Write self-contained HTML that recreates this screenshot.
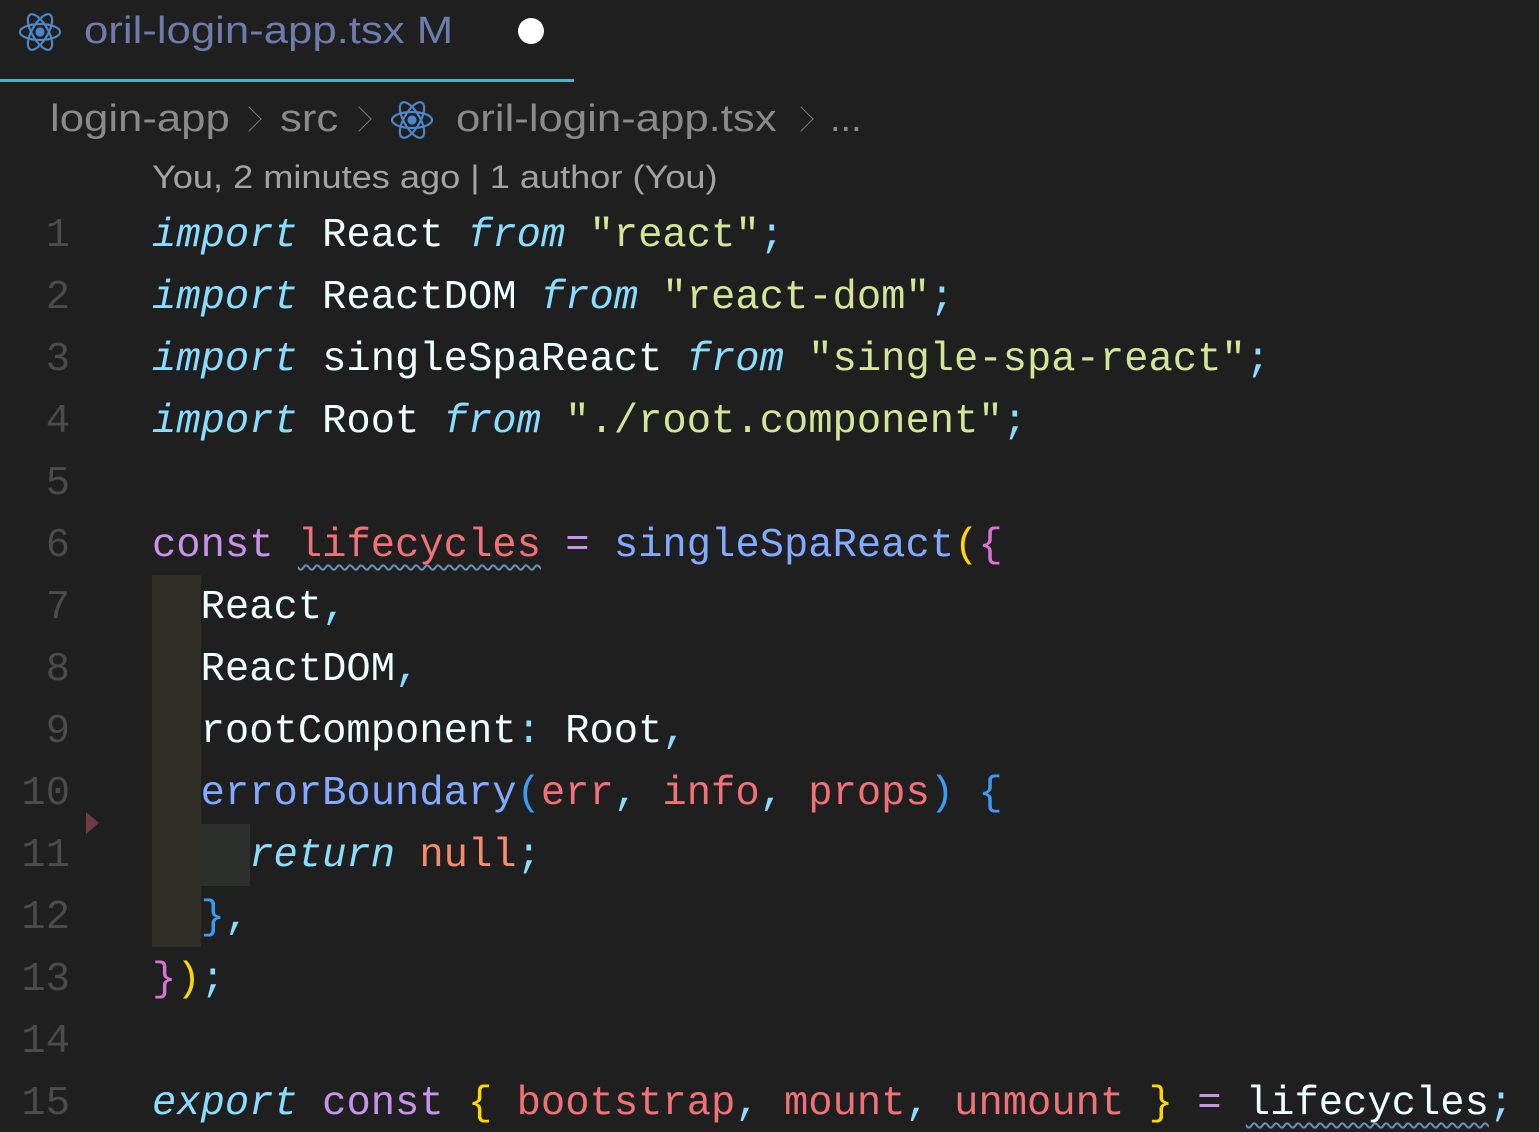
<!DOCTYPE html>
<html><head><meta charset="utf-8"><style>
html,body{margin:0;padding:0;background:#1f1f1f;width:1539px;height:1132px;overflow:hidden;position:relative}
.sans{font-family:"Liberation Sans",sans-serif;position:absolute;white-space:nowrap;transform-origin:0 0}
.ln{position:absolute;left:0;width:70px;text-align:right;font-family:"Liberation Mono",monospace;font-size:40.5px;color:#4b4b4b;line-height:62px}
.code{position:absolute;left:152px;font-family:"Liberation Mono","DejaVu Sans Mono",monospace;font-size:40.5px;line-height:62px;white-space:pre;color:#eeffff}
.k{color:#89ddff;font-style:italic}.s{color:#d4e59a}.p{color:#c792ea}.v{color:#f07178}.f{color:#82aaff}.y{color:#ffd700}.b{color:#89ddff}.o{color:#f78c6c}.w{color:#eeffff}.pk{color:#d675d6}.bl{color:#3b9cf5}
.sq{text-decoration:underline wavy #6a90b8;text-decoration-thickness:2px;text-underline-offset:8px}
.chev{position:absolute;width:17px;height:17px;border-right:1.6px solid #7a7a7a;border-top:1.6px solid #7a7a7a;transform:rotate(45deg)}
</style></head><body>
<svg style="position:absolute;left:18px;top:10px" width="44" height="44" viewBox="-22 -22 44 44" fill="none" stroke="#4c86c6" stroke-width="2.2"><ellipse rx="20" ry="8"/><ellipse rx="20" ry="8" transform="rotate(60)"/><ellipse rx="20" ry="8" transform="rotate(120)"/><circle r="3.5" fill="#4c86c6"/></svg>
<div class="sans" style="left:84px;top:10px;font-size:38px;color:#6d7cab;transform:scaleX(1.15)">oril-login-app.tsx&nbsp;M</div>
<div style="position:absolute;left:518px;top:18px;width:26px;height:26px;border-radius:50%;background:#fff"></div>
<div style="position:absolute;left:0;top:79px;width:574px;height:3px;background:#4fb0c6"></div>
<div class="sans" style="left:50px;top:98px;font-size:38px;color:#8a8a8a;transform:scaleX(1.15)">login-app</div>
<div class="chev" style="left:240px;top:110px"></div>
<div class="sans" style="left:280px;top:98px;font-size:38px;color:#8a8a8a;transform:scaleX(1.15)">src</div>
<div class="chev" style="left:350px;top:110px"></div>
<svg style="position:absolute;left:390px;top:98px" width="44" height="44" viewBox="-22 -22 44 44" fill="none" stroke="#4c86c6" stroke-width="2.2"><ellipse rx="20" ry="8"/><ellipse rx="20" ry="8" transform="rotate(60)"/><ellipse rx="20" ry="8" transform="rotate(120)"/><circle r="3.5" fill="#4c86c6"/></svg>
<div class="sans" style="left:456px;top:98px;font-size:38px;color:#8a8a8a;transform:scaleX(1.15)">oril-login-app.tsx</div>
<div class="chev" style="left:792px;top:110px"></div>
<div class="sans" style="left:830px;top:98px;font-size:38px;color:#8a8a8a">...</div>
<div class="sans" style="left:152px;top:159px;font-size:32px;color:#a3a3a3;transform:scaleX(1.13)">You, 2 minutes ago | 1 author (You)</div>
<div style="position:absolute;left:152px;top:575px;width:49px;height:372px;background:#2e2e27"></div>
<div style="position:absolute;left:201px;top:824px;width:49px;height:62px;background:#2c2f2b"></div>
<div style="position:absolute;left:86px;top:812px;width:0;height:0;border-top:11px solid transparent;border-bottom:11px solid transparent;border-left:13px solid #6e3c43"></div>
<div class="ln" style="top:205px">1<br>2<br>3<br>4<br>5<br>6<br>7<br>8<br>9<br>10<br>11<br>12<br>13<br>14<br>15</div>
<div class="code" style="top:205px"><span class="k">import</span> React <span class="k">from</span> <span class="s">"react"</span><span class="b">;</span>
<span class="k">import</span> ReactDOM <span class="k">from</span> <span class="s">"react-dom"</span><span class="b">;</span>
<span class="k">import</span> singleSpaReact <span class="k">from</span> <span class="s">"single-spa-react"</span><span class="b">;</span>
<span class="k">import</span> Root <span class="k">from</span> <span class="s">"./root.component"</span><span class="b">;</span>

<span class="p">const</span> <span class="v sq">lifecycles</span> <span class="p">=</span> <span class="f">singleSpaReact</span><span class="y">(</span><span class="pk">{</span>
  React<span class="b">,</span>
  ReactDOM<span class="b">,</span>
  rootComponent<span class="b">:</span> Root<span class="b">,</span>
  <span class="f">errorBoundary</span><span class="bl">(</span><span class="v">err</span><span class="b">,</span> <span class="v">info</span><span class="b">,</span> <span class="v">props</span><span class="bl">)</span> <span class="bl">{</span>
    <span class="k">return</span> <span class="o">null</span><span class="b">;</span>
  <span class="bl">}</span><span class="b">,</span>
<span class="pk">}</span><span class="y">)</span><span class="b">;</span>

<span class="k">export</span> <span class="p">const</span> <span class="y">{</span> <span class="v">bootstrap</span><span class="b">,</span> <span class="v">mount</span><span class="b">,</span> <span class="v">unmount</span> <span class="y">}</span> <span class="p">=</span> <span class="sq">lifecycles</span><span class="b">;</span></div>
</body></html>
